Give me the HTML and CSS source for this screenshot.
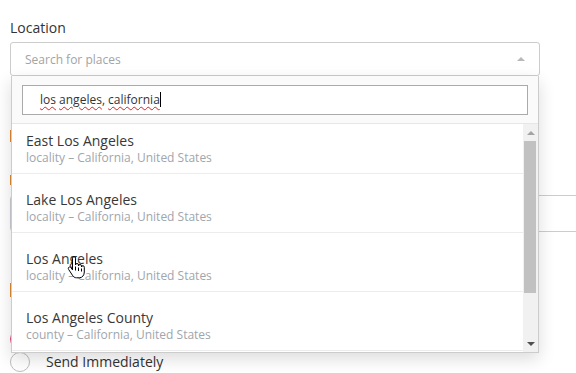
FILE: index.html
```html
<!DOCTYPE html>
<html>
  <head>
    <meta charset="UTF-8" />
    <title>Location</title>
    <link rel="stylesheet" href="styles.css">
  </head>
  <body>
    <div class="field-label">Location</div>
    <div class="select-wrap">
      <div class="select">
        <span class="placeholder">Search for places</span>
        <span class="arrow-up"></span>
      </div>
      <div class="dropdown">
        <div class="search-wrap">
          <div class="search-input"><span class="typo">los</span> <span class="typo">angeles</span>, <span class="typo">california</span><span class="caret"></span></div>
        </div>
        <div class="results">
          <div class="list">
            <div class="item">
              <div class="item-title">East Los Angeles</div>
              <div class="item-sub">locality – California, United States</div>
            </div>
            <div class="item">
              <div class="item-title">Lake Los Angeles</div>
              <div class="item-sub">locality – California, United States</div>
            </div>
            <div class="item">
              <div class="item-title">Los Angeles</div>
              <div class="item-sub">locality – California, United States</div>
            </div>
            <div class="item">
              <div class="item-title">Los Angeles County</div>
              <div class="item-sub">county – California, United States</div>
            </div>
          </div>
          <div class="scrollbar">
            <div class="sb-btn"><span class="sb-up"></span></div>
            <div class="sb-thumb"></div>
            <div class="sb-space"></div>
            <div class="sb-btn"><span class="sb-down"></span></div>
          </div>
        </div>
      </div>
    </div>

    <div class="flag flag-1"></div>
    <div class="flag flag-2"></div>
    <div class="wide-input"></div>
    <div class="flag flag-3"></div>
    <div class="radio-row radio-first">
      <span class="radio checked"></span>
    </div>
    <div class="radio-row radio-second">
      <span class="radio"></span>
      <span class="radio-text">Send Immediately</span>
    </div>

    <svg class="hand" width="18" height="23" viewBox="0 0 18 23">
      <path d="M5.5 2.2a1.5 1.5 0 0 1 3 0V9a1.5 1.5 0 0 1 3 0v1a1.5 1.5 0 0 1 3 0v1a1.4 1.4 0 0 1 2.8 .3V16c0 3.2-2 5.8-5 5.8H9.6c-2 0-3.2-1-4.2-2.6L1.6 13.4c-.6-.9-.4-1.9.4-2.2.8-.4 1.600 0 2.1.7l1.4 2z" fill="#fff" stroke="#000" stroke-width="1" stroke-linejoin="round"/>
      <path d="M8.5 10.5v4M11.5 11.5v3.5M14.5 12.5v3" stroke="#000" stroke-width="1"/>
    </svg>
  </body>
</html>
```

FILE: styles.css
```css
body {
  margin: 0;
  padding: 18px 10px 0;
  font-family: "Open Sans", sans-serif;
  color: #333;
  overflow: hidden;
  position: relative;
  height: 373px;
  box-sizing: border-box;
}
.field-label {
  font-size: 14px;
  line-height: 20px;
  margin-bottom: 4px;
}
.select-wrap {
  position: relative;
  width: 530px;
  z-index: 10;
}
.select {
  height: 34px;
  box-sizing: border-box;
  border: 1px solid #ccc;
  border-radius: 3px;
  padding: 0 14px 0 14px;
  display: flex;
  align-items: center;
  justify-content: space-between;
  background: #fff;
}
.placeholder {
  font-size: 12px;
  color: #a3a3a3;
}
.arrow-up {
  width: 0;
  height: 0;
  border-left: 4px solid transparent;
  border-right: 4px solid transparent;
  border-bottom: 4px solid #b8b8b8;
}
.dropdown {
  position: absolute;
  top: 34px;
  left: 1px;
  right: 1px;
  border: 1px solid #ccc;
  border-top: none;
  background: #fafafa;
  box-shadow: 0 6px 16px rgba(0, 0, 0, 0.14);
}
.search-wrap {
  padding: 9px 10px 8px;
  border-bottom: 1px solid #e6e6e6;
}
.search-input {
  height: 30px;
  box-sizing: border-box;
  border: 1px solid #aaa;
  background: #fff;
  padding-left: 17px;
  font-size: 12px;
  line-height: 28px;
  color: #333;
}
.typo {
  text-decoration: underline wavy #e02020;
  text-decoration-thickness: 1px;
  text-underline-offset: 2px;
}
.caret {
  display: inline-block;
  width: 1px;
  height: 15px;
  background: #000;
  vertical-align: -3px;
}
.results {
  display: flex;
  height: 228px;
  overflow: hidden;
  background: #fff;
}
.list {
  flex: 1;
  margin-top: -9px;
}
.item {
  padding: 17px 14px 7px;
  border-bottom: 1px solid #ececec;
}
.item-title {
  font-size: 14px;
  line-height: 18px;
  color: #383838;
}
.item-sub {
  font-size: 12px;
  line-height: 16px;
  color: #a0a6ad;
}
.scrollbar {
  width: 15px;
  background: #f1f1f1;
  display: flex;
  flex-direction: column;
}
.sb-btn {
  height: 17px;
  display: flex;
  align-items: center;
  justify-content: center;
}
.sb-up {
  border-left: 4px solid transparent;
  border-right: 4px solid transparent;
  border-bottom: 4px solid #a3a3a3;
}
.sb-down {
  border-left: 4px solid transparent;
  border-right: 4px solid transparent;
  border-top: 4px solid #505050;
}
.sb-thumb {
  height: 152px;
  margin: 0 2px 0 1px;
  background: #c1c1c1;
}
.sb-space {
  flex: 1;
}
.flag {
  border-left: 1px solid #d98a32;
  width: 100px;
  height: 12px;
}
.flag-1 {
  margin-top: 54px;
}
.flag-2 {
  margin-top: 33px;
  height: 10px;
}
.wide-input {
  margin-top: 10px;
  width: 640px;
  height: 37px;
  box-sizing: border-box;
  border: 1px solid #c9cdd2;
  border-radius: 4px;
}
.flag-3 {
  margin-top: 51px;
  height: 14px;
}
.radio-row {
  display: flex;
  align-items: center;
  gap: 16px;
  font-size: 14px;
  line-height: 20px;
}
.radio-first {
  margin-top: 32px;
}
.radio-second {
  margin-top: 3px;
}
.radio {
  width: 20px;
  height: 20px;
  box-sizing: border-box;
  border: 1px solid #bdbdbd;
  border-radius: 50%;
  background: #fff;
}
.radio.checked {
  border: 2px solid #e0457b;
}
.hand {
  position: absolute;
  left: 67px;
  top: 256px;
  z-index: 20;
}
```
